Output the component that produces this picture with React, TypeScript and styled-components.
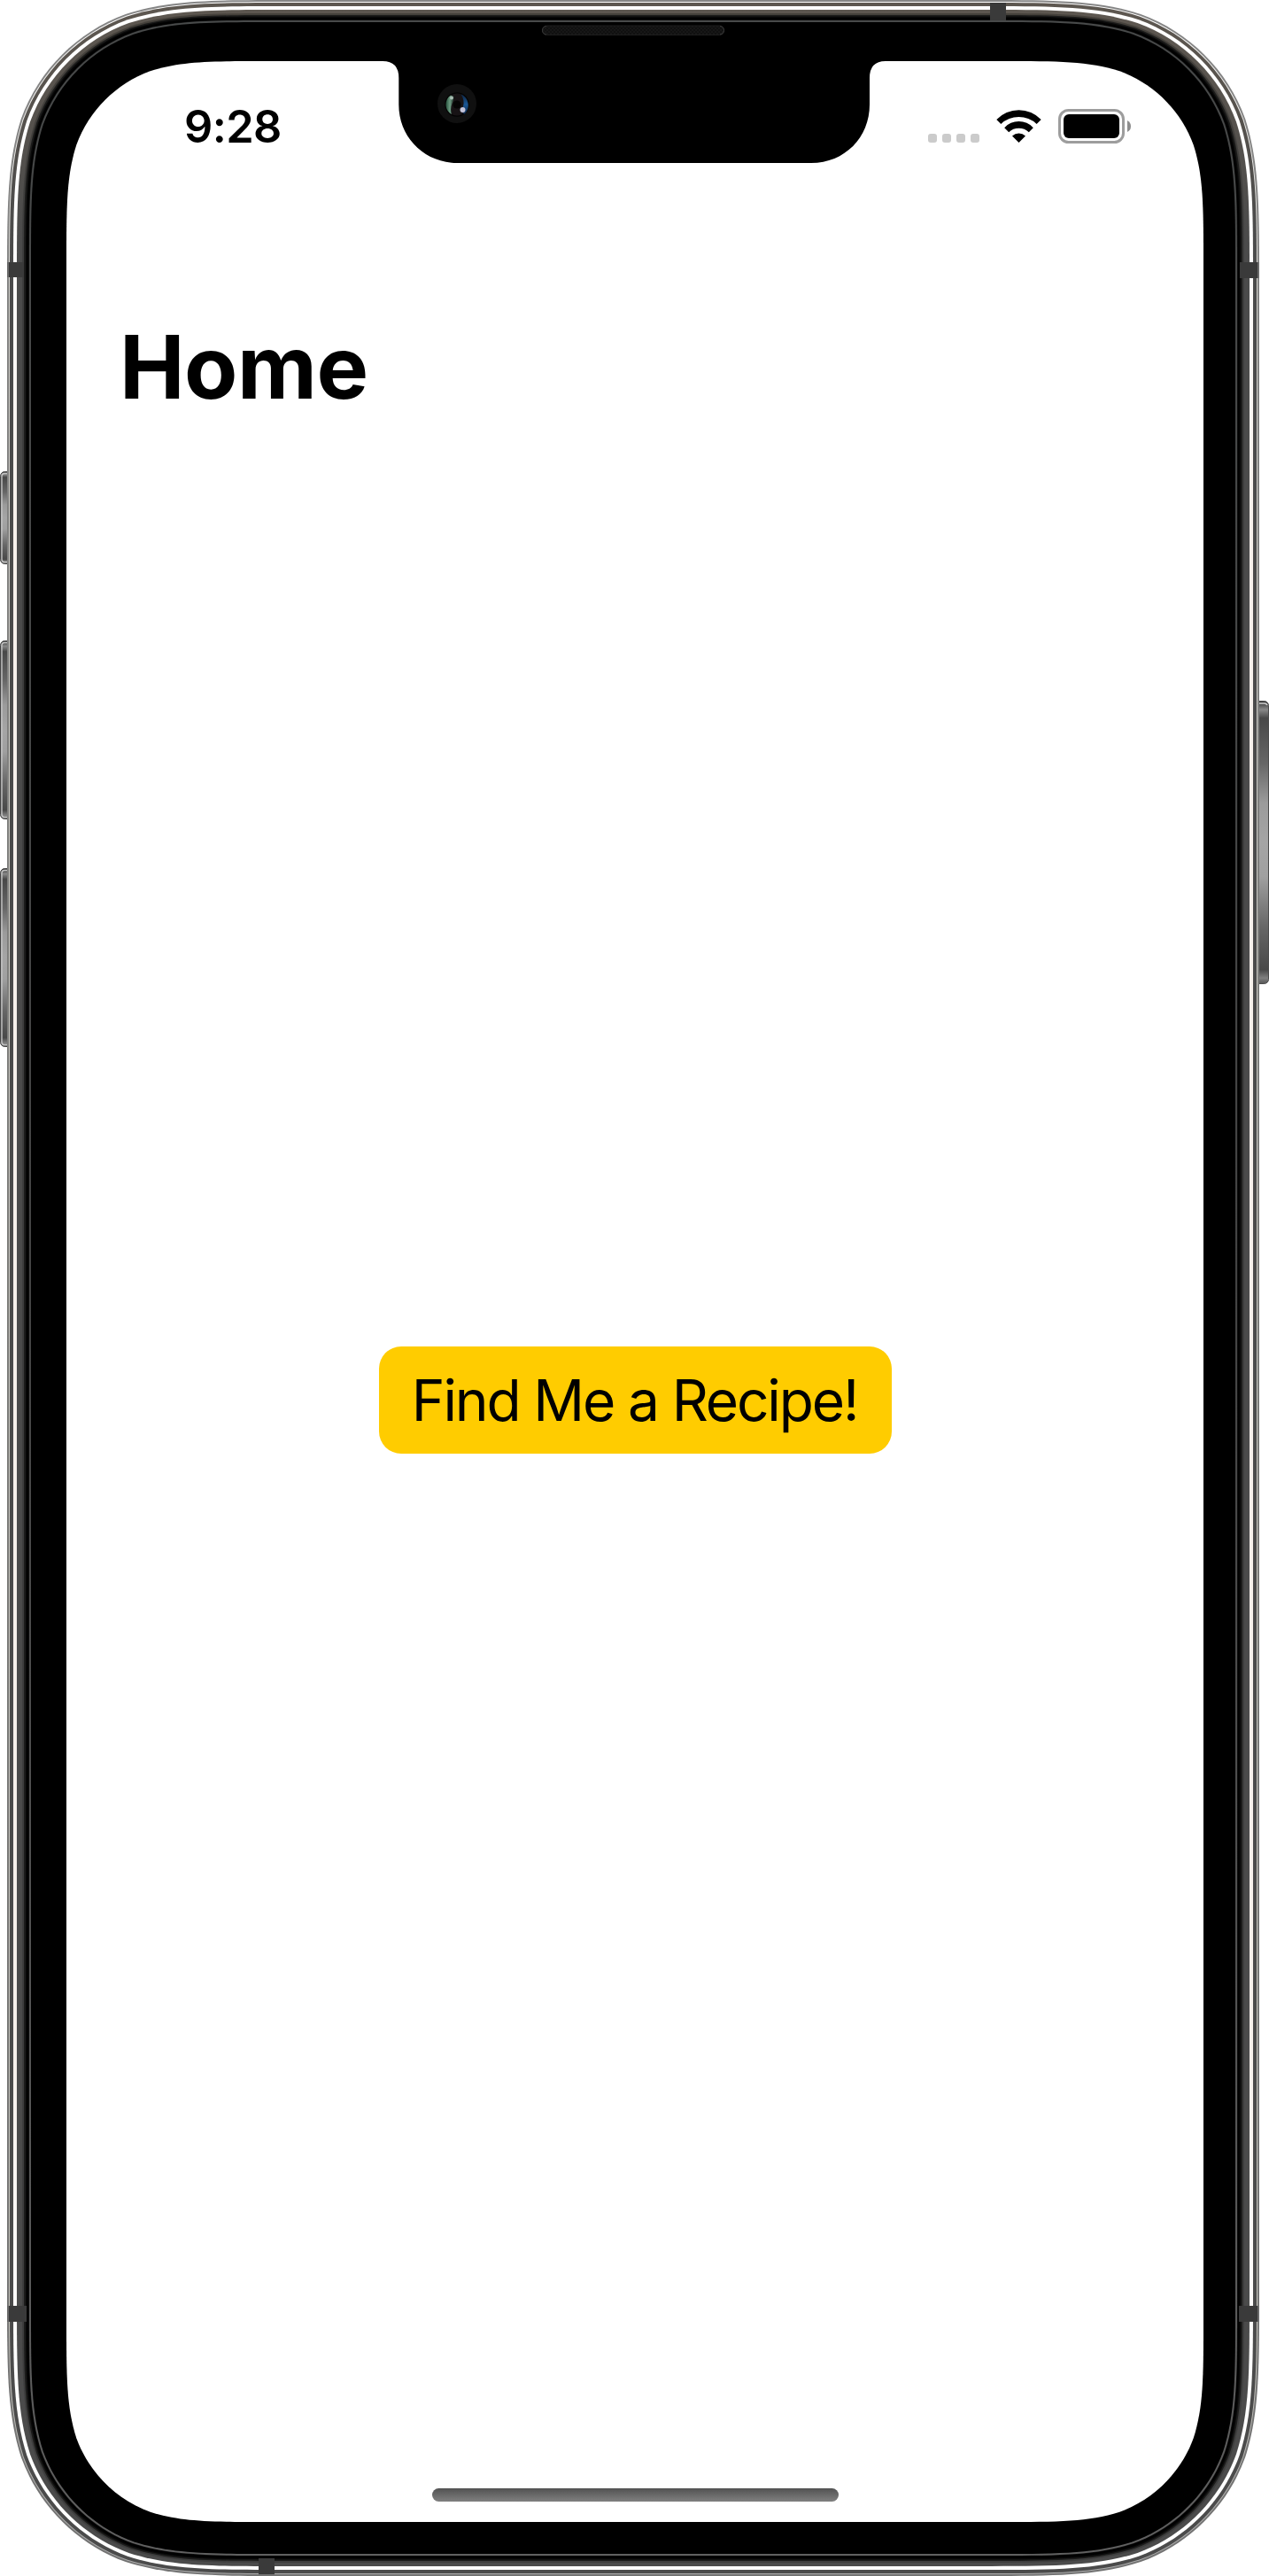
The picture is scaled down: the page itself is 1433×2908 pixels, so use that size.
import React from "react";
import styled, { createGlobalStyle } from "styled-components";

const GlobalStyle = createGlobalStyle`
  body {
    margin: 0;
    background: #ffffff;
  }
`;

const Device = styled.div`
  position: relative;
  width: 1433px;
  height: 2908px;
  overflow: hidden;
  box-sizing: border-box;
  display: flex;
  padding: 69px 74px 61px 75px;
  color: #000000;
  font-family: Inter, "Liberation Sans", sans-serif;
`;

const FrameArt = styled.svg`
  position: absolute;
  inset: 0;
  width: 1433px;
  height: 2908px;
`;

const Screen = styled.main`
  position: relative;
  flex: 1;
  display: flex;
  flex-direction: column;
`;

const StatusBar = styled.header`
  display: flex;
  justify-content: space-between;
  align-items: center;
  height: 72px;
  padding: 38px 80px 0 133px;
`;

const Clock = styled.time`
  font-size: 50.5px;
  font-weight: 560;
  line-height: 60px;
  letter-spacing: -0.6px;
`;

const StatusIcons = styled.svg`
  width: 232px;
  height: 44px;
`;

const Title = styled.h1`
  margin: 176px 0 0 60px;
  font-size: 98.5px;
  font-weight: 700;
  line-height: 120px;
  letter-spacing: -0.5px;
`;

const Content = styled.section`
  flex: 1;
  display: flex;
  justify-content: center;
  align-items: flex-start;
  padding-top: 1045px;
  padding-left: 1px;
`;

const RecipeButton = styled.button`
  width: 579px;
  height: 121px;
  padding: 0 2px 0 0;
  border: 0;
  border-radius: 25px;
  background: #ffcc00;
  color: #000000;
  font: 400 64px/121px Inter, "Liberation Sans", sans-serif;
  letter-spacing: -2.15px;
  white-space: nowrap;
`;

const HomeIndicator = styled.div`
  align-self: center;
  width: 459px;
  height: 15px;
  margin-bottom: 23px;
  border-radius: 8px;
  background: linear-gradient(#525252, #808080);
`;

/* Rounded rectangle with continuous-curvature corners. */
function squircle(l: number, t: number, r: number, b: number, R: number) {
  const k = [1.52866, 1.08849, 0.86841, 0.63149, 0.37282, 0.16906, 0.07491].map((v) => v * R);
  const corner = (
    cx: number,
    cy: number,
    sx: number,
    sy: number,
    horizontalFirst: boolean,
  ) => {
    const p = (a: number, c: number) =>
      horizontalFirst ? `${cx + sx * a} ${cy + sy * c}` : `${cx + sx * c} ${cy + sy * a}`;
    return (
      `L${p(k[0], 0)}` +
      `C${p(k[1], 0)} ${p(k[2], 0)} ${p(k[3], k[6])}` +
      `C${p(k[4], k[5])} ${p(k[5], k[4])} ${p(k[6], k[3])}` +
      `C${p(0, k[2])} ${p(0, k[1])} ${p(0, k[0])}`
    );
  };
  return (
    `M${l + k[0]} ${t}` +
    corner(r, t, -1, 1, true) +
    corner(r, b, -1, -1, false) +
    corner(l, b, 1, -1, true) +
    corner(l, t, 1, 1, false) +
    "Z"
  );
}

/* Metal layers from the outside in: [side inset, top/bottom inset, fill]. */
const LAYERS: [number, number, string][] = [
  [0, 0, "url(#rim)"],
  [2, 2, "url(#hair)"],
  [3, 3, "url(#metal)"],
  [7, 7, "url(#shine)"],
  [11, 11, "url(#metal)"],
  [17, 15, "url(#metalDark)"],
  [19, 17, "#1c1c1b"],
  [21, 18.5, "#080808"],
  [22.5, 20, "#000000"],
  [24.5, 22.5, "#1a1a1a"],
  [25, 23, "url(#innerLine)"],
  [27, 25, "#000000"],
];

const SIDE_BUTTONS = [
  { y: 532, h: 105 },
  { y: 723, h: 202 },
  { y: 980, h: 202 },
];

function PhoneFrame() {
  return (
    <FrameArt viewBox="0 0 1433 2908" aria-hidden="true">
      <defs>
        <linearGradient id="rim" x1="0" y1="0" x2="0" y2="1">
          <stop offset="0" stopColor="#858585" />
          <stop offset="0.5" stopColor="#7b7b78" />
          <stop offset="1" stopColor="#737373" />
        </linearGradient>
        <linearGradient id="hair" x1="0" y1="0" x2="0" y2="1">
          <stop offset="0" stopColor="#ffffff" />
          <stop offset="0.12" stopColor="#d2d1cb" />
          <stop offset="0.9" stopColor="#c6c5bd" />
          <stop offset="1" stopColor="#aaaaaa" />
        </linearGradient>
        <linearGradient id="metal" x1="0" y1="0" x2="0" y2="1">
          <stop offset="0" stopColor="#5d5750" />
          <stop offset="0.03" stopColor="#59544e" />
          <stop offset="0.09" stopColor="#4b4b4b" />
          <stop offset="1" stopColor="#4b4b4b" />
        </linearGradient>
        <linearGradient id="metalDark" x1="0" y1="0" x2="0" y2="1">
          <stop offset="0" stopColor="#45413b" />
          <stop offset="0.09" stopColor="#3e3e3e" />
          <stop offset="1" stopColor="#3e3e3e" />
        </linearGradient>
        <linearGradient id="shine" x1="0" y1="0" x2="0" y2="1">
          <stop offset="0" stopColor="#ffffff" />
          <stop offset="0.08" stopColor="#ffffff" />
          <stop offset="0.2" stopColor="#f6f0eb" />
          <stop offset="0.8" stopColor="#f6f0eb" />
          <stop offset="0.92" stopColor="#ffffff" />
          <stop offset="1" stopColor="#ffffff" />
        </linearGradient>
        <linearGradient id="innerLine" x1="0" y1="0" x2="0" y2="1">
          <stop offset="0" stopColor="#484a4a" />
          <stop offset="0.5" stopColor="#444444" />
          <stop offset="1" stopColor="#606060" />
        </linearGradient>
        <linearGradient id="key" x1="0" y1="0" x2="0" y2="1">
          <stop offset="0" stopColor="#303030" />
          <stop offset="0.03" stopColor="#888888" />
          <stop offset="0.06" stopColor="#484848" />
          <stop offset="0.22" stopColor="#666666" />
          <stop offset="0.36" stopColor="#9b9b9b" />
          <stop offset="0.5" stopColor="#a5a5a5" />
          <stop offset="0.62" stopColor="#a0a0a0" />
          <stop offset="0.8" stopColor="#666666" />
          <stop offset="0.95" stopColor="#484848" />
          <stop offset="0.98" stopColor="#808080" />
          <stop offset="1" stopColor="#555555" />
        </linearGradient>
        <linearGradient id="lensGreen" x1="0" y1="0" x2="1" y2="0">
          <stop offset="0" stopColor="#24503a" />
          <stop offset="0.5" stopColor="#6e9c83" />
          <stop offset="1" stopColor="#1c2b24" />
        </linearGradient>
        <linearGradient id="lensBlue" x1="0" y1="0" x2="0" y2="1">
          <stop offset="0" stopColor="#0c2440" />
          <stop offset="0.5" stopColor="#1a5796" />
          <stop offset="1" stopColor="#10294a" />
        </linearGradient>
        <pattern id="mesh" width="4" height="4" patternUnits="userSpaceOnUse">
          <rect width="4" height="4" fill="#101010" />
          <path d="M0 0L4 4M4 0L0 4" stroke="#191919" strokeWidth="0.8" />
        </pattern>
      </defs>

      {SIDE_BUTTONS.map(({ y, h }) => (
        <g key={y}>
          <rect x="0.5" y={y + 0.5} width="20" height={h - 1} rx="5" fill="url(#key)" stroke="#454545" />
          <path d={`M9 ${y + 2.5}H5Q2 ${y + 2.5} 2 ${y + 6}V${y + h - 6}Q2 ${y + h - 2.5} 5 ${y + h - 2.5}H9`} fill="none" stroke="#c4c4c4" strokeWidth="1.4" />
        </g>
      ))}
      <rect x="1412.5" y="791.5" width="20" height="319" rx="5" fill="url(#key)" stroke="#4c4c4c" />
      <path d="M1422 794H1428Q1430 794 1431 796" fill="none" stroke="#d0d0d0" strokeWidth="1.6" />

      {LAYERS.map(([side, edge, fill]) => (
        <path
          key={side}
          d={squircle(8 + side, edge, 1422 - side, 2908 - edge, 212 - side * 1.06)}
          fill={fill}
        />
      ))}

      <g fill="#3a3a3a">
        <rect x="8" y="296" width="19" height="17" />
        <rect x="1400" y="296" width="22" height="18" />
        <rect x="8" y="2603" width="22" height="18" />
        <rect x="1399" y="2603" width="23" height="18" />
        <rect x="1118" y="3" width="18" height="20" />
        <rect x="292" y="2888" width="18" height="18" />
      </g>
      <g fill="#6a6a6a">
        <rect x="8" y="296" width="2" height="17" />
        <rect x="1420" y="296" width="2" height="18" />
        <rect x="8" y="2603" width="2" height="18" />
        <rect x="1420" y="2603" width="2" height="18" />
      </g>

      <path d={squircle(75, 69, 1359, 2847, 150)} fill="#ffffff" />
      <path
        d="M432 60V69Q450.3 69 450.3 88V118C450.3 155 479 184 517 184H916C954 184 982 155 982 118V88Q982 69 1000 69V60Z"
        fill="#000000"
      />

      <rect x="612.5" y="29" width="205" height="10.5" rx="5.2" fill="url(#mesh)" stroke="#1d1d1d" />
      <path d="M617 29.5Q612.5 30 612.5 34.2T617 39M813 29.5Q817.5 30 817.5 34.2T813 39" fill="none" stroke="#3a3a3a" />

      <circle cx="516" cy="117" r="22" fill="#101010" />
      <circle cx="516" cy="118" r="13.8" fill="#040404" />
      <circle cx="516" cy="118" r="12.5" fill="#171315" />
      <path d="M509 107.5C502 112 501 124 510 129Q508 123 510.5 117Q513 112 512.5 109Z" fill="url(#lensGreen)" />
      <path d="M520.5 106.5C530 110 531.5 124 524 129Q520 126 523 120Q525 113 520.5 106.5Z" fill="url(#lensBlue)" />
      <circle cx="516" cy="118" r="4.5" fill="#050404" />
      <circle cx="510" cy="110.5" r="2" fill="#a9bdb4" />
      <circle cx="522.5" cy="124" r="3" fill="#c4c4da" />
    </FrameArt>
  );
}

function StatusGlyphs() {
  return (
    <StatusIcons viewBox="1047 121 232 44" aria-label="Status">
      <g fill="#cbcbcb">
        {[1048, 1064, 1080, 1096].map((x) => (
          <rect key={x} x={x} y="151" width="10" height="10" rx="3" />
        ))}
      </g>
      <path d="M1125.3 135A34.8 34.8 0 0 1 1175.7 135L1170.6 140A29.5 29.5 0 0 0 1130.3 140Z" />
      <path d="M1134.2 144.2A22 22 0 0 1 1166.8 144.2L1161.8 149.2A16.5 16.5 0 0 0 1139.2 149.2Z" />
      <path d="M1143 153.4A11.5 11.5 0 0 1 1158 153.4L1150.5 161Z" />
      <rect x="1196.5" y="124.5" width="72" height="36" rx="10" fill="none" stroke="#9d9d9d" strokeWidth="3" />
      <rect x="1201" y="129" width="63" height="27" rx="6" />
      <path d="M1273 136Q1277 138 1277 142.5T1273 149Z" fill="#8d8d8d" />
    </StatusIcons>
  );
}

export default function App() {
  return (
    <>
      <GlobalStyle />
      <Device>
        <PhoneFrame />
        <Screen>
          <StatusBar>
            <Clock>9:28</Clock>
            <StatusGlyphs />
          </StatusBar>
          <Title>Home</Title>
          <Content>
            <RecipeButton type="button">Find Me a Recipe!</RecipeButton>
          </Content>
          <HomeIndicator />
        </Screen>
      </Device>
    </>
  );
}
